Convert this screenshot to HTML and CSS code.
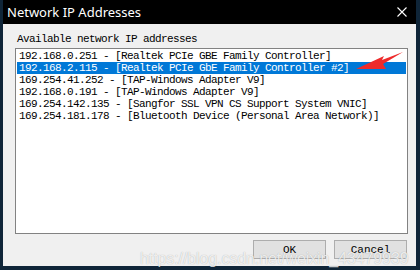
FILE: index.html
```html
<!DOCTYPE html>
<html lang="en">
<head>
    <meta charset="UTF-8">
    <meta name="viewport" content="width=device-width, initial-scale=1.0">
    <title>Network IP Addresses</title>
    <link rel="stylesheet" href="styles.css">
</head>
<body>
    <div class="window">
        <div class="titlebar">
            <span class="title">Network IP Addresses</span>
            <svg class="close" width="10" height="10" viewBox="0 0 10 10">
                <path d="M0.5 0.5 L9.5 9.5 M9.5 0.5 L0.5 9.5" stroke="#fff" stroke-width="1.1" fill="none"/>
            </svg>
        </div>
        <div class="content">
            <div class="label">Available network IP addresses</div>
            <ul class="listbox">
                <li>192.168.0.251 - [Realtek PCIe GBE Family Controller]</li>
                <li class="selected">192.168.2.115 - [Realtek PCIe GbE Family Controller #2]</li>
                <li>169.254.41.252 - [TAP-Windows Adapter V9]</li>
                <li>192.168.0.191 - [TAP-Windows Adapter V9]</li>
                <li>169.254.142.135 - [Sangfor SSL VPN CS Support System VNIC]</li>
                <li>169.254.181.178 - [Bluetooth Device (Personal Area Network)]</li>
            </ul>
            <div class="buttons">
                <button class="btn">OK</button>
                <button class="btn">Cancel</button>
            </div>
        </div>
    </div>

    <!-- red arrow drawn over the list -->
    <svg class="arrow" width="60" height="30" viewBox="0 0 60 30">
        <polygon points="50,2 29,10 31,6 3,19 33,19 30,14" fill="#ee2b2b"/>
    </svg>

    <div class="watermark">https://blog.csdn.net/weixin_43479939</div>
</body>
</html>
```

FILE: styles.css
```css
body {
    margin: 0;
    width: 420px;
    height: 270px;
    background-color: #0f2538;
    padding: 0 4px 4px 3px;
    box-sizing: border-box;
    position: relative;
    overflow: hidden;
}

.window {
    display: flex;
    flex-direction: column;
    height: 266px;
    background-color: #f0f0f0;
}

.titlebar {
    height: 26px;
    background-color: #000;
    display: flex;
    align-items: center;
    justify-content: space-between;
    padding: 0 9px 0 4px;
}

.title {
    font-family: 'Noto Sans', 'Open Sans', sans-serif;
    font-size: 13px;
    color: #fff;
    padding-bottom: 1px;
}

.close {
    display: block;
}

.content {
    flex: 1;
    display: flex;
    flex-direction: column;
    padding: 9px 8px 7px 12px;
    font-family: 'Liberation Mono', 'DejaVu Sans Mono', monospace;
    font-size: 11px;
    letter-spacing: -0.6px;
    color: #000;
}

.label {
    line-height: 12px;
    padding-left: 2px;
    margin-bottom: 3px;
}

.listbox {
    list-style: none;
    margin: 0;
    padding: 1px 1px;
    height: 182px;
    box-sizing: content-box;
    background-color: #fff;
    border: 1px solid #828282;
}

.listbox li {
    height: 12px;
    line-height: 12px;
    padding-left: 2px;
    white-space: nowrap;
}

.listbox li.selected {
    background-color: #0078d7;
    color: #fff;
}

.buttons {
    display: flex;
    justify-content: flex-end;
    gap: 8px;
    margin-top: 6px;
    padding-right: 1px;
}

.btn {
    width: 73px;
    height: 19px;
    padding: 0;
    background-color: #e1e1e1;
    border: 1px solid #adadad;
    font-family: 'Liberation Mono', 'DejaVu Sans Mono', monospace;
    font-size: 11px;
    color: #000;
}

.arrow {
    position: absolute;
    left: 353px;
    top: 50px;
}

.watermark {
    position: absolute;
    left: 140px;
    top: 250px;
    font-family: 'Liberation Sans', Arial, sans-serif;
    font-size: 16px;
    letter-spacing: -0.1px;
    color: rgba(255, 255, 255, 0.8);
    text-shadow: 0 0 1px rgba(0, 0, 0, 0.3);
    white-space: nowrap;
}
```
